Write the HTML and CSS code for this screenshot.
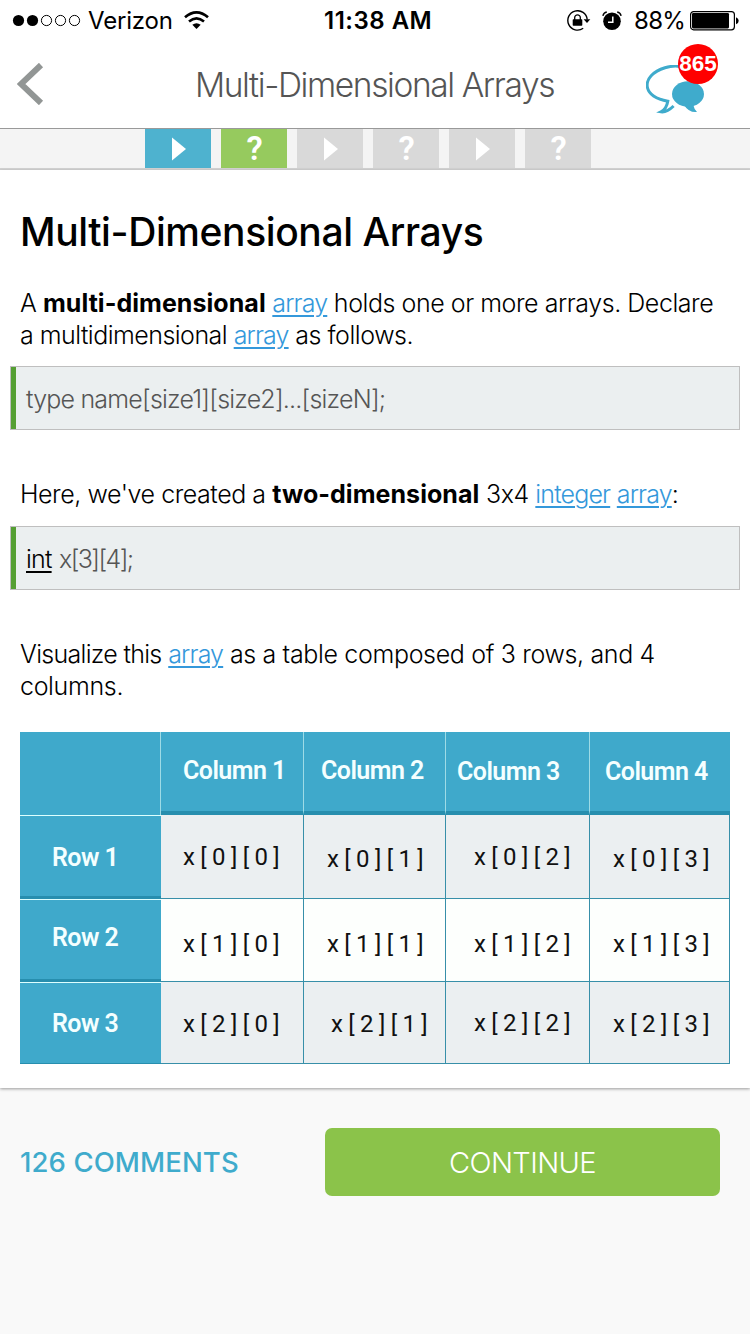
FILE: index.html
```html
<!DOCTYPE html>
<html lang="en">
<head>
<meta charset="utf-8">
<title>Multi-Dimensional Arrays</title>
<link rel="stylesheet" href="styles.css">
</head>
<body>
<div class="status">
  <svg class="signal" width="70" height="14" viewBox="0 0 70 14"><circle cx="6.500" cy="6.500" r="5.6"/><circle cx="20.500" cy="6.500" r="5.6"/><g fill="none" stroke="#000" stroke-width="1"><circle cx="34.500" cy="6.500" r="5.1"/><circle cx="48.500" cy="6.500" r="5.1"/><circle cx="62.500" cy="6.500" r="5.1"/></g></svg>
  <span class="carrier">Verizon</span>
  <svg class="wifi" width="25" height="19" viewBox="0 0 25 19"><g fill="none" stroke="#000"><path d="M1 6.3Q12.5-3.5 24 6.3" stroke-width="2.7"/><path d="M5 10.5Q12.5 4.2 20 10.5" stroke-width="2.6"/></g><path d="M8.3 13.8Q12.5 10.5 16.7 13.8L12.5 18Z"/></svg>
  <span class="time">11:38 AM</span>
  <svg class="lock" width="24" height="22" viewBox="0 0 24 22"><path d="M16.2 18.3A9.7 9.7 0 1 1 20.2 9.5" fill="none" stroke="#000" stroke-width="1.4"/><path d="M16.6 9.3H23.3L20 13Z"/><rect x="5.7" y="9.3" width="9.6" height="6.4" rx=".7"/><path d="M7.7 10V7.6a2.8 2.8 0 0 1 5.6 0V10" fill="none" stroke="#000" stroke-width="1.3"/></svg>
  <svg class="alarm" width="20" height="20" viewBox="0 0 20 20"><circle cx="10" cy="10.2" r="8.8"/><path d="M.9 4.9A5 5 0 0 1 4.8 1M15.2 1a5 5 0 0 1 3.9 3.9" fill="none" stroke="#000" stroke-width="1.4"/><path d="M10.8 5.5V11.2H6" fill="none" stroke="#fff" stroke-width="1.5"/></svg>
  <span class="percent">88%</span>
  <svg class="battery" width="49" height="20" viewBox="0 0 49 20"><rect x=".6" y=".6" width="43.8" height="18.2" rx="3" fill="none" stroke="#000" stroke-width="1.2"/><rect x="2" y="2" width="37" height="15.4" rx="1.3"/><path d="M46 6.2q2.7 1 2.7 3.5T46 13.200Z"/></svg>
</div>
<header class="nav">
  <svg class="back" width="27" height="42" viewBox="0 0 27 42"><path d="M24 2 4 21l20 19" fill="none" stroke="#929695" stroke-width="6"/></svg>
  <h1 class="nav-title">Multi-Dimensional Arrays</h1>
  <div class="chat">
    <svg width="60" height="49" viewBox="0 0 60 49"><path d="M43 4.500C36 .8 27 .3 19 2.800 7 6.500 0 14 1.300 22 2.500 29 10 34.500 21.800 36.200 21 41 19.500 44.500 15 46.800 20.500 47.600 24 44.500 27.600 41" fill="none" stroke="#3fabcc" stroke-width="3"/><ellipse cx="42" cy="29" rx="16" ry="12.700" fill="#3fabcc"/><path d="M34 39h13q1 5 4 8-8 1-13-7Z" fill="#3fabcc"/></svg>
    <span class="badge">865</span>
  </div>
</header>
<nav class="steps">
  <span class="step blue"><svg width="16" height="26" viewBox="0 0 16 26"><path d="M1 1.500 15 13 1 24.500Z" fill="#fff"/></svg></span>
  <span class="step green">?</span>
  <span class="step"><svg width="16" height="26" viewBox="0 0 16 26"><path d="M1 1.500 15 13 1 24.500Z" fill="#fff"/></svg></span>
  <span class="step">?</span>
  <span class="step"><svg width="16" height="26" viewBox="0 0 16 26"><path d="M1 1.500 15 13 1 24.500Z" fill="#fff"/></svg></span>
  <span class="step">?</span>
</nav>
<main class="lesson">
  <h2 class="heading">Multi-Dimensional Arrays</h2>
  <p class="text intro">A <b>multi-dimensional</b> <a>array</a> holds one or more arrays. Declare<br><span class="tight">a multidimensional</span> <a>array</a> as follows.</p>
  <div class="code">type name[size1][size2]...[sizeN];</div>
  <p class="text second">Here, we've created a <b>two-dimensional</b> 3x4 <a>integer</a> <a>array</a>:</p>
  <div class="code declaration"><u>int</u> x[3][4];</div>
  <p class="text third"><span class="lead">Visualize this</span> <a>array</a> as a table composed of 3 rows, and 4<br>columns.</p>
  <div class="table">
    <div class="th corner"></div><div class="th c1">Column 1</div><div class="th c2">Column 2</div><div class="th c3 low">Column 3</div><div class="th c4 low">Column 4</div>
    <div class="rh">Row 1</div><div class="td d1">x[0][0]</div><div class="td d2 low">x[0][1]</div><div class="td d3">x[0][2]</div><div class="td d4 low">x[0][3]</div>
    <div class="rh r2">Row 2</div><div class="td white d1">x[1][0]</div><div class="td white d2">x[1][1]</div><div class="td white d3">x[1][2]</div><div class="td white d4">x[1][3]</div>
    <div class="rh r3">Row 3</div><div class="td d1 last">x[2][0]</div><div class="td d2 last shift">x[2][1]</div><div class="td d3 last up">x[2][2]</div><div class="td d4 last">x[2][3]</div>
  </div>
</main>
<footer class="actions">
  <span class="comments">126 COMMENTS</span>
  <span class="continue">CONTINUE</span>
</footer>
</body>
</html>
```
FILE: styles.css
```css
* { box-sizing: border-box; }
body { margin: 0; width: 750px; height: 1334px; overflow: hidden; background: #f9f9f9; font-family: Inter, "Liberation Sans", sans-serif; color: #000; display: flex; flex-direction: column; }
svg { display: block; flex: none; }
h1, h2, p { margin: 0; font-weight: 300; white-space: nowrap; }

.status { height: 40px; background: #fff; display: flex; align-items: center; font-size: 24px; line-height: 42px; white-space: nowrap; padding: 1px 0 0 12px; }
.carrier { width: 84px; margin-left: 6px; letter-spacing: -0.2px; }
.wifi { margin-left: 12px; }
.time { margin-left: 115px; width: 108px; font-weight: 600; letter-spacing: 0.5px; }
.lock { margin-left: 135px; }
.alarm { margin-left: 11px; }
.percent { margin-left: 12px; width: 50px; letter-spacing: -0.7px; }
.battery { margin-left: 6px; }

.nav { height: 88px; background: #fff; display: flex; align-items: center; padding-left: 17px; }
.nav-title { margin-left: 151px; width: 361px; font-size: 33.5px; line-height: 42px; padding-top: 1px; color: #555; letter-spacing: -1.4px; }
.chat { position: relative; margin: 11px 0 0 90px; }
.badge { position: absolute; left: 32px; top: -21px; width: 40px; height: 40px; border-radius: 50%; background: #f00; color: #fff; font: bold 22.5px/40px "Liberation Sans", sans-serif; text-align: center; }

.steps { height: 42px; background: #f4f4f4; border-top: 1px solid #999; border-bottom: 2px solid #d2d2d2; display: flex; gap: 10px; padding-left: 145px; }
.step { width: 66px; height: 39px; padding-left: 1px; background: #d9d9d9; color: #fff; display: flex; align-items: center; justify-content: center; font: 600 33px/39px Roboto, sans-serif; }
.blue { background: #4eb2cf; }
.green { background: #96ca5e; }

.lesson { height: 918px; background: #fff; box-shadow: 0 1px 3px #999; padding: 36px 10px 0; }
.heading { padding-left: 10px; font-size: 39px; line-height: 52px; font-weight: 550; letter-spacing: -0.4px; }
.text { padding-left: 10px; font-size: 25px; line-height: 32px; letter-spacing: -0.45px; }
.text b { font-weight: 700; letter-spacing: 0.05px; }
.text a { color: #3498db; letter-spacing: -0.85px; text-decoration: underline; text-underline-offset: 3px; text-decoration-thickness: 2px; }
.intro { margin-top: 29px; }
.intro .tight { letter-spacing: -0.53px; }
.code { margin-top: 15px; height: 64px; border: 1px solid #bfbfbf; background: linear-gradient(90deg, #559f33 5px, #ebeff0 5px); padding-left: 15px; font-size: 25px; line-height: 64px; font-weight: 300; color: #555; letter-spacing: -0.8px; white-space: nowrap; }
.code u { color: #000; letter-spacing: -0.8px; text-underline-offset: 3px; text-decoration-thickness: 2px; }
.declaration { margin-top: 16px; letter-spacing: -1.6px; word-spacing: 2px; }
.second, .third { margin-top: 48px; }
.third { letter-spacing: -0.34px; }
.lead { letter-spacing: -0.7px; }

.table { margin: 30px 10px 0; width: 710px; display: grid; grid-template-columns: 141px 143px 142px 144px 140px; grid-template-rows: 83px 84px 83px 82px; font-family: Roboto, sans-serif; white-space: nowrap; }
.th, .rh { background: #3fa9cb; color: #f4ffff; font-size: 25px; line-height: 78px; font-weight: 600; letter-spacing: -0.55px; }
.th { border-right: 1px solid #9edbe6; border-bottom: 4px solid #278eae; }
.th.c4 { border-right: 0; }
.th.corner { border-bottom: 0; }
.c1 { padding-left: 22px; }
.c2 { padding-left: 17px; }
.c3 { padding-left: 11px; }
.c4 { padding-left: 15px; }
.th.low { line-height: 80px; }
.rh { padding-left: 32px; line-height: 83px; border-top: 1px solid #dff; border-bottom: 3px solid #278eae; }
.r2 { line-height: 75px; }
.r3 { line-height: 81px; border-bottom-width: 1px; }
.td { background: #ebeff1; border-right: 1px solid #378fa9; border-bottom: 1px solid #378fa9; font-size: 24px; line-height: 85px; letter-spacing: 5.4px; color: #111; }
.td.low { line-height: 88px; }
.td.white { background: #fdfffd; line-height: 90px; }
.td.last { line-height: 84px; }
.td.up { line-height: 82px; }
.d1 { padding-left: 22px; }
.d2 { padding-left: 23px; }
.d3 { padding-left: 28px; }
.d4 { padding-left: 23px; }
.shift { padding-left: 27px; }

.actions { display: flex; justify-content: space-between; align-items: center; padding: 40px 30px 0 20px; }
.comments { font-size: 27.5px; font-weight: 500; color: #3fabcc; letter-spacing: 0.1px; }
.continue { width: 395px; height: 68px; border-radius: 7px; background: #8bc34a; color: #fff; font-size: 29px; line-height: 70px; font-weight: 300; text-align: center; letter-spacing: -0.6px; }
```
